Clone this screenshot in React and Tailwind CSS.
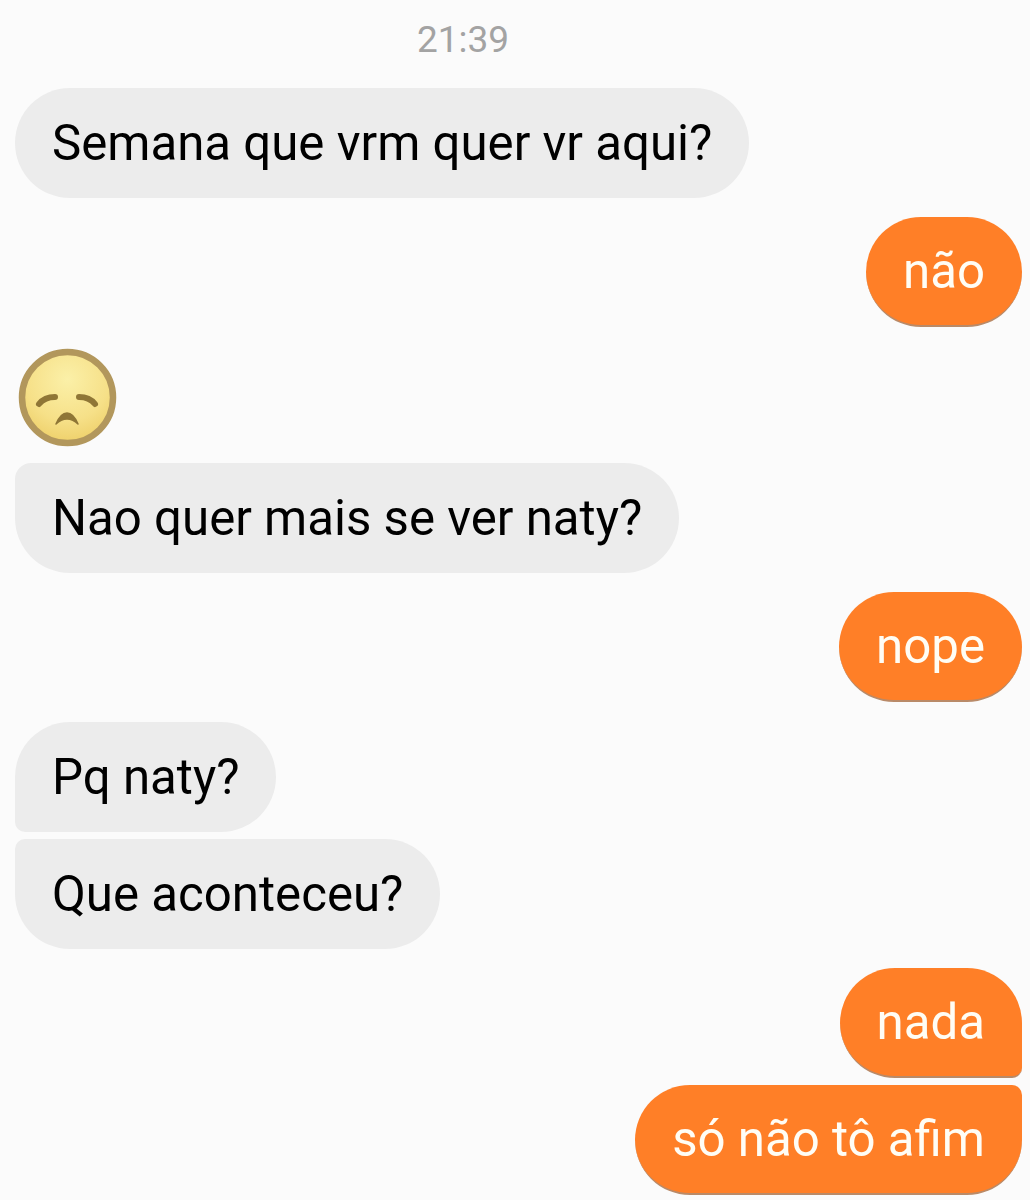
import React from "react";

function Face() {
  return (
    <svg width="100" height="100" viewBox="0 0 100 100" className="block">
      <defs>
        <radialGradient id="faceFill" cx="50%" cy="30%" r="70%">
          <stop offset="0%" stopColor="#fbf0a8" />
          <stop offset="65%" stopColor="#f6e088" />
          <stop offset="100%" stopColor="#eed06a" />
        </radialGradient>
      </defs>
      <circle cx="49.5" cy="49.5" r="45.5" fill="url(#faceFill)" stroke="#b2975c" strokeWidth="6.5" />
      <path d="M21 56 C25 51 31 49 37 49" fill="none" stroke="#8f7636" strokeWidth="6" strokeLinecap="round" />
      <path d="M77 56 C73 51 67 49 61 49" fill="none" stroke="#8f7636" strokeWidth="6" strokeLinecap="round" />
      <path d="M38 76 C41 69 45 65 49 65 C53 65 57 69 60 76 C56 72 53 71 49 71 C45 71 42 72 38 76 Z" fill="#8f7636" stroke="#8f7636" strokeWidth="1.5" strokeLinejoin="round" />
    </svg>
  );
}

function Received({ children, shape, className }) {
  return (
    <div className={`h-[110px] w-fit flex items-center bg-[#ececec] px-[37px] pt-[2px] text-[49.2px] text-black ${shape} ${className || ""}`}>
      {children}
    </div>
  );
}

function Sent({ children, shape, className }) {
  return (
    <div className={`h-[110px] w-fit self-end flex items-center bg-[#ff7f27] px-[37px] pt-[2px] text-[49.2px] text-[#fffdf5] border-b-2 border-[#b98a68] ${shape} ${className || ""}`}>
      {children}
    </div>
  );
}

export default function App() {
  return (
    <div className="w-[1030px] h-[1200px] overflow-hidden bg-[#fbfbfb] pl-[15px] pr-2 flex flex-col font-['Roboto',sans-serif] whitespace-nowrap">
      <div className="h-[88px] pt-5 pr-[111px] text-center text-[37px] leading-[40px] text-[#a3a3a3]">21:39</div>
      <Received shape="rounded-[55px]">Semana que vrm quer vr aqui?</Received>
      <Sent shape="rounded-[55px]" className="mt-[19px]">não</Sent>
      <div className="mt-[21px] ml-[3px]"><Face /></div>
      <Received shape="rounded-[55px] rounded-tl-[16px]" className="mt-[15px]">Nao quer mais se ver naty?</Received>
      <Sent shape="rounded-[55px]" className="mt-[19px]">nope</Sent>
      <Received shape="rounded-[55px] rounded-bl-[10px]" className="mt-[20px]">Pq naty?</Received>
      <Received shape="rounded-[55px] rounded-tl-[10px]" className="mt-[7px]">Que aconteceu?</Received>
      <Sent shape="rounded-[55px] rounded-br-[10px]" className="mt-[19px]">nada</Sent>
      <Sent shape="rounded-[55px] rounded-tr-[10px]" className="mt-[7px]">só não tô afim</Sent>
    </div>
  );
}
